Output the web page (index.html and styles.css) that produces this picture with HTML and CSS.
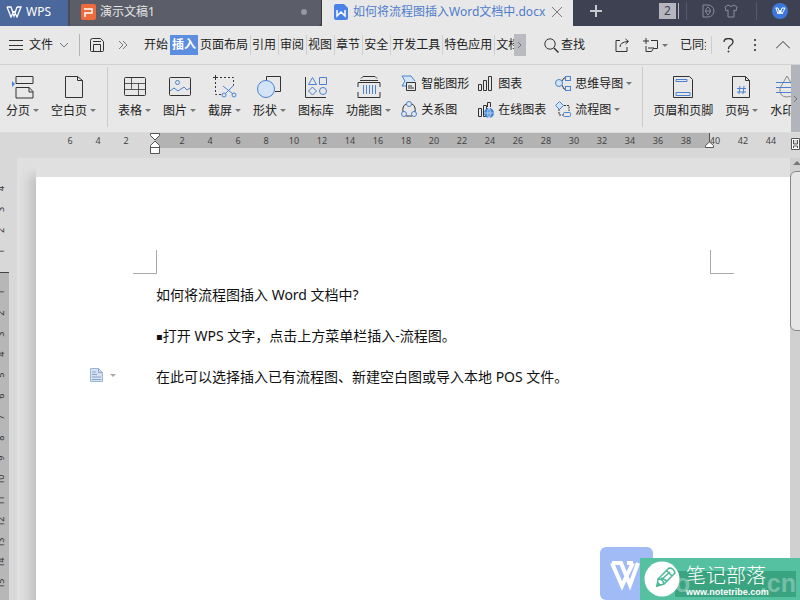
FILE: index.html
```
<!DOCTYPE html>
<html lang="zh-CN">
<head>
<meta charset="utf-8">
<title>WPS</title>
<link rel="stylesheet" href="styles.css">
</head>
<body>
<div class="app">
  <header class="titlebar">
    <button class="home"><svg width="16" height="12" viewBox="0 0 16 12" class="w-line"><path d="M1 1h4l3 9 3-9M1 1l4 10 3-6M8 5l3 6 4-10h-4"/></svg>WPS</button>
    <button class="tab tab-idle"><svg width="15" height="16" viewBox="0 0 15 16"><rect width="15" height="16" rx="2" fill="#ee6b3b"/><path d="M3 5h8v4H4v4" fill="none" stroke="#fff" stroke-width="1.5"/></svg><span class="tab-name">演示文稿1</span><i class="dot"></i></button>
    <button class="tab tab-active"><svg width="14" height="16" viewBox="0 0 14 16"><path d="M2 0h8l4 4v10q0 2-2 2H2q-2 0-2-2V2q0-2 2-2z" fill="#4b82e8"/><path d="M3 6v6l4-4 4 4V6" fill="none" stroke="#fff" stroke-width="1.5"/></svg><span class="tab-name">如何将流程图插入Word文档中.docx</span><svg width="12" height="12" viewBox="0 0 12 12" class="line gray"><path d="M1 1l10 10M11 1L1 11"/></svg></button>
    <div class="title-tools">
      <button aria-label="新建"><svg width="14" height="14" viewBox="0 0 14 14" class="line pale"><path d="M7 1v12M1 7h12" stroke-width="2"/></svg></button>
      <span class="grow"></span>
      <button class="count">2</button>
      <i class="tsep"></i>
      <button aria-label="稻壳"><svg width="13" height="14" viewBox="0 0 13 14" class="line mid"><path d="M1 1h5a6 6 0 0 1 0 12H1zM6 3c3 2 3 5 0 8-3-3-3-6 0-8zM3 7h6"/></svg></button>
      <button aria-label="皮肤"><svg width="14" height="14" viewBox="0 0 14 14" class="line mid"><path d="M4 1q3 3 6 0l3 2-1 4-2-1v7H4V6L2 7 1 3z"/></svg></button>
      <i class="tsep wide"></i>
      <button aria-label="账号"><svg width="16" height="16" viewBox="0 0 16 16"><circle cx="8" cy="8" r="8" fill="#3c78dc"/><path d="M3.500 5h2.500l2 6 2-6M4 5l2 6 2-4 2 4 3-6h-3" fill="none" stroke="#fff"/></svg></button>
    </div>
  </header>

  <nav class="menubar">
    <button class="file"><svg width="14" height="12" viewBox="0 0 14 12" class="line"><path d="M0 1.500h14M0 6.500h14M0 10.500h14"/></svg>文件<svg width="10" height="6" viewBox="0 0 10 6" class="line gray"><path d="M1 1l4 4 4-4"/></svg></button>
    <i class="msep"></i>
    <button aria-label="保存" class="save"><svg width="14" height="14" viewBox="0 0 14 14" class="line"><path d="M1.500 13.500q-1 0-1-1V2.500q0-2 2-2h8l3 3v9q0 1-1 1zM3.500 13V6.500h7V13M3 3.500h8"/></svg></button>
    <button aria-label="更多" class="more"><svg width="10" height="8" viewBox="0 0 10 8" class="line gray"><path d="M1 0l4 4-4 4M5 0l4 4-4 4"/></svg></button>
    <div class="menus">
      <button>开始</button><button class="on">插入</button><button>页面布局</button><button>引用</button><button>审阅</button><button>视图</button><button>章节</button><button>安全</button><button>开发工具</button><button>特色应用</button><button>文档</button>
    </div>
    <button class="menu-next" aria-label="下一组"><svg width="5" height="8" viewBox="0 0 5 8" class="line gray"><path d="M1 1l3 3-3 3"/></svg></button>
    <button class="find"><svg width="15" height="15" viewBox="0 0 15 15" class="line"><circle cx="6" cy="6" r="5.200"/><path d="M10 10l4.500 4.500" stroke-width="1.500"/></svg>查找</button>
    <div class="menu-tools">
      <button aria-label="分享"><svg width="15" height="14" viewBox="0 0 15 14" class="line"><path d="M5 2.500H1v11h11V9M5 9q0-5 8-5.500M10.500 1l3 2.500-3 2.500"/></svg></button>
      <button aria-label="批注" class="note"><svg width="16" height="15" viewBox="0 0 16 15" class="line"><path d="M3 0v6M0 3h6M8 2.500h6.500v8h-4l-2 3H3V8M5 10h6"/></svg><i class="caret"></i></button>
      <button class="sync">已同步</button>
      <i class="msep short"></i>
      <button aria-label="帮助"><svg width="11" height="15" viewBox="0 0 11 15" class="line"><path d="M1 4q0-3.500 4.500-3.500T10 4q0 2-2.500 3.500-2 1-2 3.500" stroke-width="1.300"/><circle cx="5.500" cy="13.500" r=".6"/></svg></button>
      <button aria-label="选项"><svg width="4" height="13" viewBox="0 0 4 13"><path d="M1 0h2v2H1zM1 5h2v2H1zM1 10h2v2H1z" fill="#555"/></svg></button>
      <button aria-label="收起功能区"><svg width="14" height="8" viewBox="0 0 14 8" class="line"><path d="M0 7.500l7-7 7 7"/></svg></button>
    </div>
  </nav>

  <section class="ribbon">
    <div class="ribbon-body">
      <button class="big"><svg width="22" height="24" viewBox="0 0 22 24" class="line"><path d="M4 8.500V1.500h17v7H4M4 23V12.500h13l4 4V23zM17 12v5h4"/><path d="M0 6v6l3-3z" fill="#4a82cf" stroke="none"/></svg><span>分页<i class="caret"></i></span></button>
      <button class="big"><svg width="20" height="24" viewBox="0 0 20 24" class="line"><path d="M1.500 1.500h12l5 4v17h-17zM13.500 1.500v4h5"/></svg><span>空白页<i class="caret"></i></span></button>
      <i class="rsep"></i>
      <button class="big"><svg width="22" height="24" viewBox="0 0 22 24" class="line"><rect x=".5" y="2.500" width="21" height="18" rx="1"/><path d="M1 8.500h20M1 14.500h20M7.500 3v11M14.500 8v12" stroke-width=".8"/></svg><span>表格<i class="caret"></i></span></button>
      <button class="big"><svg width="22" height="24" viewBox="0 0 22 24" class="line"><rect x=".5" y="2.500" width="21" height="18" rx="1"/><g class="blue"><circle cx="8.500" cy="7.500" r="2"/><path d="M1 16l4-3 4 3 6-4 3 3 3-2"/></g></svg><span>图片<i class="caret"></i></span></button>
      <button class="big"><svg width="24" height="24" viewBox="0 0 24 24" class="line"><path d="M0 2.500h5M2.500 0v5"/><path d="M7 2.500h13.500V11M2.500 7v12.500H9" stroke-dasharray="2 2"/><g class="blue"><path d="M10 11l10 8M21 10l-9 9"/><circle cx="11" cy="20" r="2"/><circle cx="21" cy="20" r="2"/></g></svg><span>截屏<i class="caret"></i></span></button>
      <button class="big"><svg width="25" height="24" viewBox="0 0 25 24" class="line"><path d="M9.500 7V1.500h14v15H18"/><circle cx="9" cy="14" r="8.500" class="blue fill"/></svg><span>形状<i class="caret"></i></span></button>
      <button class="big"><svg width="22" height="24" viewBox="0 0 22 24" class="line"><path d="M.500 2v20.500H21"/><g class="blue"><path d="M7.500 2.500l4 7h-8zM14.500 2.500h7v7h-7zM7.500 12l4 4-4 4-4-4z"/><circle cx="18" cy="16" r="3.500"/></g></svg><span>图标库</span></button>
      <button class="big"><svg width="24" height="24" viewBox="0 0 24 24" class="line"><path d="M4 3.500l2-2h12l2 2M3 5.500h18M1 12V7.500h22V12M1 17v5.500h22V17"/><path d="M6.500 10v9M9.500 10v9M12.500 10v9M15.500 10v9M18.500 10v9" class="blue"/></svg><span>功能图<i class="caret"></i></span></button>
      <div class="pair">
        <button><svg width="16" height="17" viewBox="0 0 16 17" class="line"><path d="M5 11H1l3-5-3-5h9l4 5" class="blue fill"/><path d="M5.500 7.500h9v8h-9zM7 11h4M7 13h6" fill="#e8e8e8"/></svg>智能图形</button>
        <button><svg width="16" height="17" viewBox="0 0 16 17" class="line"><path d="M5 3q-4 2-3 8M11 3q4 2 3 8M5 15h6"/><g class="blue"><circle cx="8" cy="3" r="2.500"/><circle cx="3" cy="13" r="2.500"/><circle cx="13" cy="13" r="2.500"/></g></svg>关系图</button>
      </div>
      <div class="pair">
        <button><svg width="16" height="17" viewBox="0 0 16 17" class="line"><path d="M.500 9.500h3v6h-3zM5.500 5.500h3v10h-3zM10.500 1.500h3v14h-3z"/></svg>图表</button>
        <button><svg width="16" height="17" viewBox="0 0 16 17" class="line"><path d="M.500 7.500h3v8h-3zM5.500 4.500h3v11h-3zM9.500 6V1.500h3V6"/><circle cx="11" cy="12" r="5" fill="#3d82d2" stroke="none"/><path d="M6 12h10M11 7v10M11 7q-4 5 0 10M11 7q4 5 0 10" stroke="#e6f0fb" stroke-width=".6"/></svg>在线图表</button>
      </div>
      <div class="pair">
        <button><svg width="16" height="17" viewBox="0 0 16 17" class="line"><path d="M7 6l2-3h2M7 10l2 4h2"/><g class="blue"><circle cx="4" cy="8" r="3.500" class="fill"/><rect x="10.500" y="1.500" width="5" height="4"/><rect x="10.500" y="11.500" width="5" height="4"/></g></svg>思维导图<i class="caret"></i></button>
        <button><svg width="16" height="17" viewBox="0 0 16 17" class="line"><path d="M4 8v6h4M9 4.500h5V10" stroke-dasharray="2 1"/><g class="blue"><path d="M4.500.500l4 4-4 4-4-4z" class="fill"/><rect x="8.500" y="11.500" width="7" height="4" rx="1"/></g></svg>流程图<i class="caret"></i></button>
      </div>
      <i class="rsep"></i>
      <button class="big"><svg width="20" height="24" viewBox="0 0 20 24" class="line"><path d="M.500 1.500h16l3 3v18h-19z"/><path d="M3 4.500h11v2H3zM3 17.500h14v3H3z" class="blue"/></svg><span>页眉和页脚</span></button>
      <button class="big"><svg width="19" height="24" viewBox="0 0 19 24" class="line"><path d="M.500 1.500h13l4 4v17h-17zM13.500 1.500v4h4"/><path d="M8 11l-1 8M12 11l-1 8M5 13.500h9M5 17h9" class="blue"/></svg><span>页码<i class="caret"></i></span></button>
      <button class="big"><svg width="22" height="24" viewBox="0 0 22 24" class="line"><path d="M11 1l-7 12q-1 9 7 9t7-9z" stroke="#888"/><path d="M0 7.500h22M0 12.500h22M0 17.500h22" class="blue"/></svg><span>水印<i class="caret"></i></span></button>
    </div>
    <button class="ribbon-next" aria-label="向右滚动"><svg width="5" height="8" viewBox="0 0 5 8" class="line gray"><path d="M1 1l3 3-3 3"/></svg></button>
  </section>

  <div class="ruler">
    <div class="ruler-pre"><span>6</span><span>4</span><span>2</span></div>
    <div class="ruler-zero"><svg width="12" height="22" viewBox="0 0 12 22" class="marker"><path d="M1.500.500h9v2L6 7 1.500 2.500zM6 8l4.500 4.500v2h-9v-2zM1.500 14.500h9v6h-9z"/></svg></div>
    <div class="ruler-main"><span>2</span><span>4</span><span>6</span><span>8</span><span>10</span><span>12</span><span>14</span><span>16</span><span>18</span><span>20</span><span>22</span><span>24</span><span>26</span><span>28</span><span>30</span><span>32</span><span>34</span><span>36</span><span>38</span></div>
    <div class="ruler-post"><svg width="10" height="16" viewBox="0 0 10 16" class="marker end"><path d="M4.500 0v9M4.500 9l4 3.500v2h-8v-2z"/></svg><span>40</span><span>42</span><span>44</span></div>
    <button class="ruler-btn" aria-label="标尺"><svg width="9" height="12" viewBox="0 0 9 12" class="marker"><path d="M.500.500h8v11h-8zM2.500 2v4h4V2M2.500 10V8h4v2"/></svg></button>
  </div>

  <main class="work">
    <aside class="vruler">
      <div class="v-top"><span>4</span><span>3</span><span>2</span><span>1</span></div>
      <div class="v-main"><span>1</span><span>2</span><span>3</span><span>4</span><span>5</span><span>6</span><span>7</span><span>8</span><span>9</span><span>10</span><span>11</span><span>12</span><span>13</span><span>14</span><span>15</span></div>
    </aside>
    <div class="desk">
      <article class="page">
        <div class="marks"><i class="mark left"></i><i class="mark right"></i></div>
        <p>如何将流程图插入 Word 文档中?</p>
        <p><span class="bullet">▪</span>打开 WPS 文字，点击上方菜单栏插入-流程图。</p>
        <p>在此可以选择插入已有流程图、新建空白图或导入本地 POS 文件。
          <button class="para-tool" aria-label="段落布局"><svg width="13" height="14" viewBox="0 0 13 14"><path d="M.500.500h8l4 4v9H.500z" fill="#d5e0f1" stroke="#9db5d6"/><path d="M8.500.500v4h4M2 4h4M2 6.500h5M2 9h9M2 11.500h9" fill="none" stroke="#8aa6cd"/></svg><i class="caret"></i></button>
        </p>
      </article>
    </div>
    <div class="scroll"><i class="up"></i><i class="thumb"></i></div>
  </main>
</div>

<div class="brand">
  <div class="brand-w"><svg width="53" height="53" viewBox="0 0 53 53"><path d="M12 16h9l9 22 8-22M12 16l10 23 7-15M27 16h6M33 16l-4 8" fill="none" stroke="#fff" stroke-width="4"/></svg></div>
  <div class="brand-note">
    <span class="ghost"><b>o</b><b>.cn</b></span>
    <svg width="36" height="36" viewBox="0 0 36 36" class="pencil"><circle cx="18" cy="18" r="17.500" fill="#fff"/><g fill="none" stroke="#4db896" stroke-width="1.500"><path d="M13 25l1-7L25 7q5 0 6 5L20 23zM14 18q5 0 6 5M17 17l6 3M23 10l5 5M17 19l9-8"/><path d="M13 25l1-3 2 2z" fill="#4db896"/></g></svg>
    <div class="brand-text"><strong>笔记部落</strong><small>www.notetribe.com</small></div>
  </div>
</div>
</body>
</html>
```
FILE: styles.css
```
* { box-sizing: border-box; }
body {
  margin: 0;
  font: 12px/16px "Noto Sans", "Noto Sans CJK SC", sans-serif;
  color: #222;
  background: #e8e8e8;
}
button {
  font: inherit;
  color: inherit;
  background: none;
  border: 0;
  padding: 0;
  margin: 0;
  white-space: nowrap;
}
svg { display: block; flex: none; }
.app { display: flex; flex-direction: column; height: 100vh; overflow: hidden; }
.grow { flex: 1; }

.line { fill: none; stroke: #333; stroke-width: 1; }
.line.gray { stroke: #777; }
.line.pale { stroke: #c9cad0; }
.line.mid { stroke: #8b8d99; }
.line .blue, .line.blue { stroke: #4a82cf; }
.line .fill { fill: #d4e4f7; }
.w-line { fill: none; stroke: #fff; stroke-width: 1.3; }
.caret {
  flex: none;
  width: 6px;
  border: 3px solid transparent;
  border-top-color: #777;
  border-bottom: 0;
  margin-left: 3px;
}

/* title bar */
.titlebar { display: flex; height: 26px; flex: none; background: #3e4151; }
.home { display: flex; align-items: center; gap: 4px; width: 68px; padding: 0 6px 2px; background: #4b689c; color: #fff; }
.tab { display: flex; align-items: center; text-align: left; padding-bottom: 2px; }
.tab-name { flex: 1; }
.tab-idle { width: 254px; padding-left: 11px; padding-right: 14px; gap: 4px; background: #5b5e68; color: #e4e4e6; border-radius: 0 0 4px 0; border-right: 1px solid #34363f; border-left: 2px solid #484b56; }
.dot { width: 6px; height: 6px; border-radius: 50%; background: #96989f; }
.tab-active { width: 251px; padding-left: 12px; padding-right: 10px; gap: 5px; background: #e8e8e8; color: #4e7ccb; }
.title-tools { flex: 1; display: flex; align-items: center; padding: 0 12px 4px 16px; gap: 5px; }
.title-tools button { display: flex; margin-right: 4px; }
.title-tools button:last-child { margin-right: 0; }
.title-tools .count { display: block; width: 22px; margin: 0; background: #b6b7be; color: #3e4151; border-right: 5px double #3e4151; }
.tsep { width: 1px; height: 18px; background: #565967; margin-right: 10px; }
.tsep.wide { margin-left: 9px; }

/* menu bar */
.menubar { display: flex; align-items: center; height: 39px; flex: none; border-bottom: 1px solid #d2d2d2; }
.file { display: flex; align-items: center; gap: 6px; margin-left: 9px; }
.msep { width: 1px; height: 22px; margin-left: 10px; background: #b4b4b4; }
.save { margin-left: 10px; }
.more { margin-left: 14px; }
.menus { flex: 1; display: flex; min-width: 0; overflow: hidden; margin-left: 14px; }
.menus button { flex: none; height: 20px; padding: 0 2px; }
.menus button + button + button + button { border-left: 1px solid #cfcfcf; padding-left: 1px; }
.menus .on { background: #5b8de0; color: #fff; font-weight: 700; }
.menu-next { display: grid; place-items: center; width: 12px; height: 22px; background: #babbc0; }
.find { display: flex; align-items: center; gap: 2px; margin-left: 18px; }
.menu-tools { display: flex; align-items: center; margin-left: 30px; padding-right: 10px; }
.note { display: flex; align-items: center; margin-left: 13px; }
.sync { width: 26px; overflow: hidden; text-align: left; margin-left: 12px; }
.msep.short { margin-left: 5px; margin-right: 11px; height: 18px; background: #cdcdcd; }
.menu-tools .short ~ button + button { margin-left: 19px; }

/* ribbon */
.ribbon { display: flex; height: 68px; flex: none; border-bottom: 1px solid #dcdcdc; }
.ribbon-body { flex: 1; min-width: 0; display: flex; align-items: center; gap: 12px; overflow: hidden; padding: 0 0 4px 6px; }
.big { flex: none; display: flex; flex-direction: column; align-items: center; gap: 4px; }
.big span { display: flex; align-items: center; }
.rsep { flex: none; width: 1px; height: 60px; background: #cbcbcb; margin: 0 -2px 0 -1px; }
.pair { flex: none; display: flex; flex-direction: column; gap: 9px; margin: 0 -1px 0 -2px; }
.pair button { display: flex; align-items: center; gap: 4px; }
.pair .caret { margin-left: -1px; }
.ribbon-next { display: grid; place-items: center; width: 9px; background: #b1b4ba; }

/* horizontal ruler */
.ruler { display: flex; flex: none; height: 25px; overflow: hidden; background: #d8d8d8; font-size: 9px; line-height: 16px; text-align: center; color: #444; }
.ruler span { display: block; flex: none; width: 28px; }
.ruler-pre { display: flex; width: 140px; padding-left: 56px; }
.ruler-zero { width: 28px; padding-left: 9px; height: 15px; background: linear-gradient(90deg, transparent 15px, #b3b3b3 15px); }
.ruler-main { display: flex; width: 541px; height: 15px; background: #b3b3b3; }
.ruler-post { position: relative; flex: 1; display: flex; min-width: 0; }
.ruler-post .end { position: absolute; left: -4px; top: 0; }
.ruler-post span:first-of-type { margin-left: -8px; }
.ruler-btn { padding-top: 4px; width: 9px; height: 18px; }
.marker { fill: #fff; stroke: #555; }

/* workspace */
.work { flex: 1; display: flex; min-height: 0; overflow: hidden; background: #d8d8d8; }
.vruler { width: 9px; overflow: hidden; font-size: 9px; line-height: 12px; color: #333; }
.vruler span { writing-mode: vertical-rl; transform: rotate(180deg); text-align: center; width: 12px; margin-left: -5px; }
.v-top { display: grid; grid-template-rows: repeat(4, 21px); height: 115px; padding-top: 20px; border-bottom: 1px solid #444; }
.v-main { display: grid; grid-template-rows: repeat(15, 1fr); height: 332px; padding: 9px 0 11px; background: #b7b7b7; }
.desk { flex: 1; display: flex; min-width: 0; margin-left: 8px; padding: 19px 0 0 19px; background: linear-gradient(#e0e0e0 8px, transparent 26px), linear-gradient(90deg, #e2e2e2, #d8d8d8 9px, #c2c2c2 19px, #e0e0e0 19px); }
.page { flex: 1; min-width: 0; padding-top: 73px; background: #fff; font-size: 14px; line-height: 41px; color: #111; }
.marks { display: flex; justify-content: space-between; padding: 0 56px 0 97px; }
.mark { width: 24px; height: 24px; border: 0 solid #aaa; border-bottom-width: 1px; }
.mark.left { border-right-width: 1px; }
.mark.right { border-left-width: 1px; }
.page p { position: relative; margin: 0 0 0 120px; }
.bullet { font-family: "DejaVu Sans", sans-serif; font-size: 10px; line-height: 10px; vertical-align: 1px; }
.para-tool { position: absolute; left: -66px; top: 12px; display: flex; align-items: center; gap: 4px; }
.para-tool .caret { border-top-color: #aaa; }
.scroll { width: 10px; background: #d0d0d0; overflow: hidden; }
.up { display: block; width: 8px; margin: 3px 0 0 3px; border: 4px solid transparent; border-top: 0; border-bottom-color: #777; }
.thumb { display: block; width: 16px; height: 160px; margin-top: 6px; border: 1px solid #888; border-radius: 6px; background: #e6e6e6; }

/* corner logo laid over the document */
.brand { position: fixed; right: 0; bottom: 0; display: flex; align-items: flex-end; }
.brand-w { width: 53px; height: 53px; border-radius: 6px; background: #a1bbf7; }
.brand-note { position: relative; display: flex; align-items: center; gap: 6px; width: 160px; height: 42px; margin-left: -13px; padding-left: 4px; background: #56c1a0; color: #fff; overflow: hidden; }
.brand-text { position: relative; display: flex; flex-direction: column; padding-top: 4px; }
.brand-text strong { font-size: 20px; line-height: 22px; font-weight: 300; }
.brand-text small { font: 700 9px/10px "Liberation Sans", sans-serif; }
.pencil { position: relative; }
.ghost { position: absolute; right: 4px; bottom: 3px; display: flex; justify-content: space-between; width: 121px; height: 26px; background: #3aa380; color: #75bfa8; font: 25px/24px "Liberation Sans", sans-serif; }
```
